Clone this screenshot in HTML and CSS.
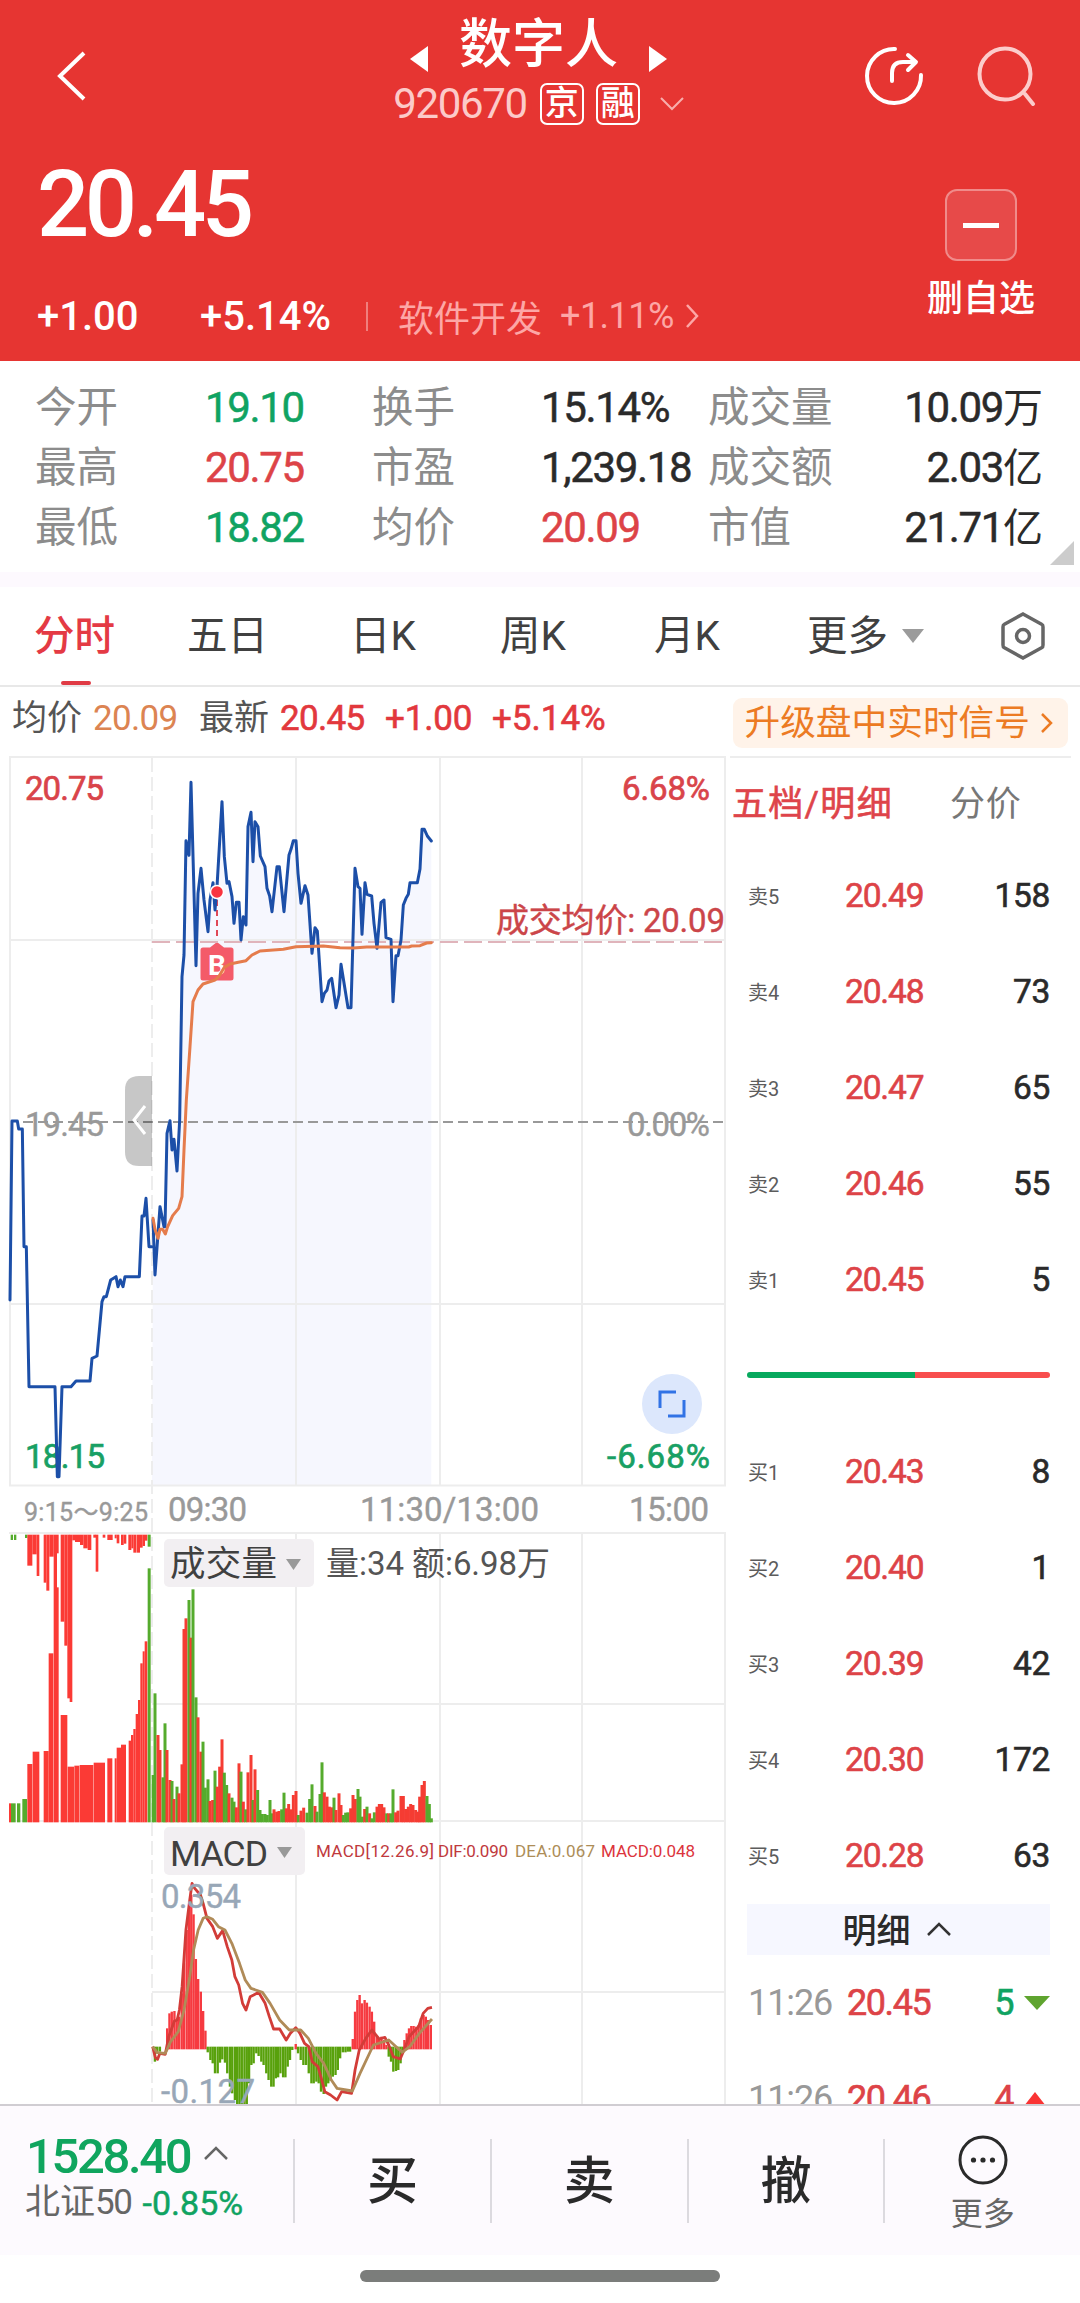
FILE: index.html
```html
<!DOCTYPE html>
<html lang="zh-CN">
<head>
    <meta charset="UTF-8">
    <meta name="viewport" content="width=device-width, initial-scale=1.0">
    <title>数字人 920670</title>
    <link rel="stylesheet" href="styles.css">
</head>
<body>
    <header class="header">
        <div class="nav">
            <svg class="back" width="32" height="54" viewBox="0 0 32 54"><path d="M28 4 4 27 28 50"/></svg>
            <div class="title">
                <div class="title-name">
                    <svg width="18" height="28"><path d="M18 1v26L0 14z"/></svg>
                    <h1>数字人</h1>
                    <svg width="18" height="28"><path d="M0 1v26L18 14z"/></svg>
                </div>
                <div class="title-code">
                    <span class="num code">920670</span>
                    <span class="badge">京</span>
                    <span class="badge">融</span>
                    <svg width="24" height="14" viewBox="0 0 24 14"><path d="M1 1 12 12 23 1"/></svg>
                </div>
            </div>
            <div class="nav-icons">
                <svg width="60" height="60" viewBox="0 0 60 60">
                    <path d="M31 3A27 27 0 1 0 57 29"/>
                    <path d="M28 35V27Q28 16 39 16H51M44 9l8 7-8 8"/>
                </svg>
                <svg class="search" width="60" height="60" viewBox="0 0 60 60">
                    <circle cx="28" cy="28" r="25.5"/>
                    <path d="M48 48l8 10"/>
                </svg>
            </div>
        </div>
        <div class="quote">
            <div class="quote-left">
                <div class="num price">20.45</div>
                <div class="change">
                    <span class="num chg">+1.00</span>
                    <span class="num pct">+5.14%</span>
                    <span class="sep"></span>
                    <span class="sector">软件开发</span>
                    <span class="num sector-pct">+1.11%</span>
                    <svg width="14" height="26" viewBox="0 0 14 26"><path d="M2 2 12 13 2 24"/></svg>
                </div>
            </div>
            <div class="watch">
                <div class="watch-btn"></div>
                <span>删自选</span>
            </div>
        </div>
    </header>

    <section class="stats">
        <span class="label">今开</span><span class="num green">19.10</span>
        <span class="label">换手</span><span class="num">15.14%</span>
        <span class="label">成交量</span><span class="num right">10.09<i>万</i></span>
        <span class="label">最高</span><span class="num red">20.75</span>
        <span class="label">市盈</span><span class="num">1,239.18</span>
        <span class="label">成交额</span><span class="num right">2.03<i>亿</i></span>
        <span class="label">最低</span><span class="num green">18.82</span>
        <span class="label">均价</span><span class="num red">20.09</span>
        <span class="label">市值</span><span class="num right">21.71<i>亿</i></span>
        <svg class="corner" width="24" height="24"><path d="M24 0v24H0z"/></svg>
    </section>

    <nav class="tabs">
        <span class="tab active">分时</span>
        <span class="tab">五日</span>
        <span class="tab">日K</span>
        <span class="tab">周K</span>
        <span class="tab">月K</span>
        <span class="tab more">更多<svg width="22" height="14"><path d="M0 0h22L11 14z"/></svg></span>
        <svg class="setting" width="46" height="50" viewBox="0 0 46 50">
            <path d="M23 3 42 13.5Q43 14 43 16V34Q43 36 42 36.5L23 47 4 36.500Q3 36 3 34V16Q3 14 4 13.500z"/>
            <circle cx="23" cy="25" r="6.500"/>
        </svg>
    </nav>

    <div class="info">
        <span class="label">均价</span>
        <span class="num orange">20.09</span>
        <span class="label last">最新</span>
        <span class="num red">20.45</span>
        <span class="num red diff">+1.00</span>
        <span class="num red rate">+5.14%</span>
        <div class="signal">升级盘中实时信号<svg width="12" height="22" viewBox="0 0 12 22"><path d="M1 2 10 11 1 20"/></svg></div>
    </div>

    <main class="main">
        <svg class="chart" width="730" height="1348" viewBox="0 756 730 1348">
            <!-- average-price area -->
            <path id="area" class="area"/>

            <!-- grid -->
            <g class="grid">
                <path d="M9 757H726M10 940H725M10 1304H725M9 1485.500H726M9 1533H726M152 1704H725M10 1821H725M152 1992H725"/>
                <path d="M10 757V1486M296 757V1486M440 757V1486M582 757V1486M725 757V1486"/>
                <path d="M296 1533V2104M440 1533V2104M582 1533V2104M725 1533V2104"/>
                <path class="dashed" d="M152 758V2104"/>
            </g>
            <path class="zero" d="M23 1122H725"/>

            <!-- axis labels -->
            <g class="axis">
                <text class="up" x="25" y="800" textLength="79">20.75</text>
                <text class="up" x="622" y="800" textLength="88">6.68%</text>
                <text x="25" y="1136" textLength="79">19.45</text>
                <text x="627" y="1136" textLength="83">0.00%</text>
                <text class="down" x="25" y="1468" textLength="80">18.15</text>
                <text class="down" x="607" y="1468" textLength="103">-6.68%</text>
                <text class="small" x="24" y="1521" textLength="124">9:15～9:25</text>
                <text x="168" y="1521" textLength="79">09:30</text>
                <text x="360" y="1521" textLength="179">11:30/13:00</text>
                <text x="629" y="1521" textLength="80">15:00</text>
            </g>

            <!-- buy marker -->
            <path class="marker-line" d="M217 900V940"/>
            <path class="marker" d="M203 947.500H210L217 942 224 947.500H231Q233.500 947.500 233.500 950V978Q233.500 980.500 231 980.500H203Q200.500 980.500 200.500 978V950Q200.500 947.500 203 947.500z"/>
            <text class="marker-text" x="217" y="975">B</text>

            <path class="cost" d="M152 942H726"/>
            <text class="cost-text" x="496" y="932" textLength="229">成交均价: 20.09</text>

            <svg x="0" y="740" width="450" height="750" viewBox="0 0 1350 2250">
                <polyline class="line" id="auction"/>
                <polyline class="line" id="price"/>
                <polyline class="line avg" id="avg"/>
            </svg>
            <circle class="marker-dot" cx="217" cy="892" r="6.500"/>

            <path class="handle" d="M152 1076V1166H139Q125 1166 125 1152V1090Q125 1076 139 1076z"/>
            <path class="handle-arrow" d="M145 1106 134 1120 145 1134"/>

            <circle class="expand" cx="672" cy="1404" r="30"/>
            <path class="expand-icon" d="M660 1408V1392H676M684 1400V1416H668"/>

            <!-- volume -->
            <svg id="volume" x="0" y="1500" width="450" height="340" viewBox="0 0 1350 1020"></svg>
            <rect class="pill" x="164" y="1539" width="150" height="48" rx="5"/>
            <text class="pill-text" x="170" y="1576" textLength="107">成交量</text>
            <path class="arrow" d="M286 1559H301L293.500 1570z"/>
            <text class="vol-text" x="326" y="1575" textLength="224">量:34 额:6.98万</text>

            <!-- macd -->
            <svg x="140" y="1820" width="300" height="284" viewBox="0 0 784 852" preserveAspectRatio="none">
                <g id="macd"></g>
                <polyline class="macd-line dif" points="33,680 40,712 46,718 52,700 66,703 75,650 90,603 97,600 103,570 110,500 120,330 130,240 136,190 143,205 158,225 165,250 175,295 190,320 202,355 216,332 228,380 240,420 248,470 258,495 268,550 277,570 288,530 297,525 310,517 327,550 338,590 349,627 365,627 382,660 393,640 407,623 418,640 430,670 441,680 450,725 465,740 475,780 483,815 498,825 515,840 527,815 553,820 562,750 573,690 590,655 606,630 625,657 640,652 650,675 662,710 680,717 690,690 703,650 728,620 740,580 752,565 763,562"/>
                <polyline class="macd-line dea" points="33,680 45,698 66,700 80,665 100,635 115,570 130,470 140,390 152,330 165,295 175,290 190,298 205,320 222,330 240,370 260,430 275,480 290,505 320,517 340,550 365,600 390,630 420,630 440,655 460,700 480,730 500,780 515,805 555,813 575,760 610,675 650,660 685,697 705,680 730,640 763,597"/>
            </svg>
            <rect class="pill" x="164" y="1827" width="141" height="48" rx="5"/>
            <text class="pill-text" x="170" y="1866" textLength="98">MACD</text>
            <path class="arrow" d="M277 1847H292L284.500 1858z"/>
            <g class="legend">
                <text x="316" y="1857" textLength="118">MACD[12.26.9]</text>
                <text x="438" y="1857" textLength="70">DIF:0.090</text>
                <text class="tan" x="515" y="1857" textLength="80">DEA:0.067</text>
                <text class="bright" x="601" y="1857" textLength="94">MACD:0.048</text>
            </g>
            <text class="range" x="161" y="1908" textLength="80">0.354</text>
            <text class="range" x="161" y="2103" textLength="94">-0.127</text>
        </svg>

        <aside class="side">
            <div class="side-tabs">
                <span class="on">五档/明细</span>
                <span>分价</span>
            </div>
            <div class="row"><span class="lv">卖5</span><span class="num red">20.49</span><span class="num qty">158</span></div>
            <div class="row"><span class="lv">卖4</span><span class="num red">20.48</span><span class="num qty">73</span></div>
            <div class="row"><span class="lv">卖3</span><span class="num red">20.47</span><span class="num qty">65</span></div>
            <div class="row"><span class="lv">卖2</span><span class="num red">20.46</span><span class="num qty">55</span></div>
            <div class="row"><span class="lv">卖1</span><span class="num red">20.45</span><span class="num qty">5</span></div>
            <div class="ratio"><div class="ratio-bar"></div></div>
            <div class="row"><span class="lv">买1</span><span class="num red">20.43</span><span class="num qty">8</span></div>
            <div class="row"><span class="lv">买2</span><span class="num red">20.40</span><span class="num qty">1</span></div>
            <div class="row"><span class="lv">买3</span><span class="num red">20.39</span><span class="num qty">42</span></div>
            <div class="row"><span class="lv">买4</span><span class="num red">20.30</span><span class="num qty">172</span></div>
            <div class="row"><span class="lv">买5</span><span class="num red">20.28</span><span class="num qty">63</span></div>
            <div class="detail-head">明细<svg width="24" height="14" viewBox="0 0 24 14"><path d="M1 13 12 2 23 13"/></svg></div>
            <div class="deal"><span class="num time">11:26</span><span class="num red">20.45</span><span class="num green amount">5</span><svg width="26" height="14"><path fill="#5fa42f" d="M0 0h26L13 14z"/></svg></div>
            <div class="deal"><span class="num time">11:26</span><span class="num red">20.46</span><span class="num red amount">4</span><svg width="26" height="14"><path fill="#fa3434" d="M0 14h22L11 0z"/></svg></div>
        </aside>
    </main>

    <footer class="footer">
        <div class="index">
            <div class="index-top"><span class="num">1528.40</span><svg width="26" height="14" viewBox="0 0 26 14"><path d="M2 13 13 2 24 13"/></svg></div>
            <div class="index-bottom"><span>北证</span><span class="num">50</span><span class="num green">-0.85%</span></div>
        </div>
        <div class="action">买</div>
        <div class="action">卖</div>
        <div class="action">撤</div>
        <div class="action more-action">
            <svg width="50" height="50" viewBox="0 0 50 50">
                <circle class="ring" cx="25" cy="25" r="23"/>
                <circle cx="15.500" cy="25" r="2.600"/><circle cx="25" cy="25" r="2.600"/><circle cx="34.500" cy="25" r="2.600"/>
            </svg>
            <span>更多</span>
        </div>
    </footer>
    <div class="home"><div class="home-bar"></div></div>

    <script src="script.js"></script>
</body>
</html>
```
FILE: styles.css
```css
* {
    box-sizing: border-box;
}
body {
    margin: 0;
    width: 1080px;
    height: 2303px;
    overflow: hidden;
    background: #fff;
    color: #2a2a2a;
    font-family: Roboto, "Noto Sans CJK SC", sans-serif;
    white-space: nowrap;
}
svg {
    display: block;
    flex: none;
}
.num {
    font-weight: 500;
    letter-spacing: -0.04em;
}
.red {
    color: #dd4347;
}
.green {
    color: #10a362;
}

/* header */
.header {
    height: 361px;
    background: #e63532;
    color: #fff;
}
.nav {
    display: grid;
    grid-template-columns: 1fr auto 1fr;
    height: 160px;
}
.back {
    margin: 49px 0 0 56px;
    fill: none;
    stroke: #fff;
    stroke-width: 4;
}
.title {
    margin-left: -3px;
}
.title-name {
    display: flex;
    justify-content: center;
    align-items: center;
    gap: 31px;
    height: 82px;
    padding-top: 8px;
}
.title-name svg {
    margin-top: 28px;
    fill: #fff;
}
.title-name h1 {
    margin: 0;
    font-size: 53px;
    font-weight: 500;
    line-height: 82px;
}
.title-code {
    display: flex;
    align-items: center;
    height: 43px;
}
.title-code svg {
    margin-left: 20px;
    fill: none;
    stroke: #f8aeac;
    stroke-width: 2;
}
.code {
    margin-right: 13px;
    font-size: 42px;
    font-weight: 400;
    letter-spacing: -0.032em;
    color: #fccac9;
}
.badge {
    width: 44px;
    height: 42px;
    margin-right: 12px;
    border: 2px solid #fff;
    border-radius: 7px;
    font-size: 34px;
    font-weight: 500;
    line-height: 37px;
    text-align: center;
}
.badge + .badge {
    margin-right: 0;
}
.nav-icons {
    display: flex;
    justify-content: flex-end;
    gap: 53px;
    padding: 46px 43px 0 0;
    fill: none;
    stroke: #fff;
    stroke-width: 4;
    stroke-linecap: round;
    stroke-linejoin: round;
}
.search {
    stroke: #fccccb;
}
.quote {
    display: flex;
    justify-content: space-between;
    padding: 0 45px 0 37px;
}
.price {
    height: 126px;
    font-size: 92px;
    letter-spacing: -0.048em;
    line-height: 89px;
}
.change {
    display: flex;
    align-items: center;
    height: 60px;
    font-size: 40px;
}
.change .chg,
.change .pct {
    letter-spacing: 0;
}
.chg {
    width: 163px;
}
.pct {
    width: 166px;
}
.sep {
    width: 2px;
    height: 29px;
    margin-right: 30px;
    background: #f07f7d;
}
.sector {
    width: 162px;
    font-size: 36px;
    color: #fda7a6;
}
.change .sector-pct {
    width: 125px;
    font-size: 36px;
    font-weight: 400;
    letter-spacing: -0.015em;
    color: #fda7a6;
}
.change svg {
    fill: none;
    stroke: #fda7a6;
    stroke-width: 2.5;
}
.watch {
    width: 108px;
    padding-top: 29px;
    font-size: 36px;
    font-weight: 500;
    line-height: 76px;
}
.watch-btn {
    display: flex;
    align-items: center;
    justify-content: center;
    width: 72px;
    height: 72px;
    margin-left: 18px;
    border: 2px solid #f08b8a;
    border-radius: 12px;
    background: #e74a49;
}
.watch-btn::before {
    content: "";
    width: 36px;
    height: 5px;
    background: #fff;
}

/* stats */
.stats {
    position: relative;
    display: grid;
    grid-template-columns: 170px 167px 169px 167px 130px 1fr;
    grid-auto-rows: 60px;
    height: 211px;
    padding: 16px 37px 0 35px;
    font-size: 42px;
    line-height: 61px;
}
.stats .num {
    font-weight: 400;
    letter-spacing: -0.032em;
    -webkit-text-stroke: 0.5px currentColor;
}
.stats .label {
    font-size: 41.5px;
    color: #8c8c8c;
}
.stats .right {
    text-align: right;
}
.stats i {
    font-style: normal;
    font-size: 40px;
    letter-spacing: 0;
    -webkit-text-stroke: 0;
}
.corner {
    position: absolute;
    right: 6px;
    bottom: 7px;
    fill: #ccc;
}

/* tabs */
.tabs {
    display: flex;
    align-items: center;
    height: 115px;
    padding: 0 34px 0 34px;
    border-top: 15px solid #fdf9fe;
    border-bottom: 2px solid #e8e8e8;
    font-size: 40.5px;
    line-height: 100px;
    color: #404040;
}
.tab {
    width: 153px;
}
.tab:nth-child(2) {
    width: 163px;
}
.tab:nth-child(3) {
    width: 150px;
}
.tab:nth-child(4) {
    width: 154px;
}
.tab:nth-child(5) {
    width: 153px;
}
.tab.active {
    position: relative;
    color: #e43a44;
    font-weight: 500;
}
.tab.active::after {
    content: "";
    position: absolute;
    left: 27px;
    bottom: 1px;
    width: 30px;
    height: 4px;
    border-radius: 2px;
    background: #e03b45;
}
.tab.more {
    display: flex;
    align-items: center;
    gap: 14px;
    width: 193px;
}
.tab.more svg {
    fill: #9b9b9b;
}
.setting {
    fill: none;
    stroke: #666;
    stroke-width: 3.5;
}

/* latest quote */
.info {
    display: flex;
    align-items: center;
    height: 69px;
    padding: 0 12px 0 12px;
    font-size: 35px;
    line-height: 64px;
}
.info > span {
    height: 69px;
}
.info .label {
    width: 81px;
    color: #555;
}
.info .num {
    width: 106px;
    letter-spacing: -0.02em;
}
.info .orange {
    font-weight: 400;
    color: #dc8452;
}
.info .num.red {
    width: 105px;
    font-weight: 400;
    color: #e2383d;
    -webkit-text-stroke: 0.6px currentColor;
}
.info .num.diff {
    width: 107px;
    letter-spacing: -0.005em;
}
.info .num.rate {
    letter-spacing: 0;
}
.signal {
    display: flex;
    align-items: center;
    gap: 11px;
    height: 50px;
    margin: 3px 0 0 auto;
    padding: 0 15px 0 12px;
    border-radius: 9px;
    background: #fff3e9;
    font-size: 35.7px;
    line-height: 50px;
    color: #ec7b23;
}
.signal svg {
    fill: none;
    stroke: #ec7b23;
    stroke-width: 2.5;
}

/* charts */
.main {
    display: flex;
    height: 1348px;
    overflow: hidden;
}
.chart {
    font-family: Roboto, "Noto Sans CJK SC", sans-serif;
}
.area {
    fill: #f6f7fe;
}
.grid {
    fill: none;
    stroke: #ededed;
    stroke-width: 2;
}
.dashed {
    stroke-dasharray: 14 5;
}
.zero {
    stroke: #999;
    stroke-width: 2;
    stroke-dasharray: 10 5;
}
.axis {
    font-size: 33px;
    fill: #999;
}
.axis text {
    stroke: #999;
    stroke-width: 0.4;
}
.axis .up {
    fill: #d9444a;
    stroke: #d9444a;
    stroke-width: 0.7;
}
.axis .down {
    fill: #18a064;
    stroke: #18a064;
    stroke-width: 0.7;
}
.axis .small {
    font-size: 25px;
}
.line {
    fill: none;
    stroke: #1c4fa8;
    stroke-width: 9;
    stroke-linejoin: round;
    stroke-linecap: round;
}
.avg {
    stroke: #e57c4c;
}
.cost {
    stroke: #e0b4bb;
    stroke-width: 2;
    stroke-dasharray: 18 6;
}
.cost-text {
    font-size: 33px;
    fill: #cb4549;
    stroke: #cb4549;
    stroke-width: 0.4;
}
.marker {
    fill: #f45b69;
}
.marker-line {
    stroke: #e04856;
    stroke-width: 2;
    stroke-dasharray: 6 4;
}
.marker-dot {
    fill: #f9343f;
    stroke: #fff;
    stroke-width: 1.5;
}
.marker-text {
    font-size: 28px;
    font-weight: 700;
    text-anchor: middle;
    fill: #fff;
}
.handle {
    fill: #000;
    fill-opacity: 0.22;
}
.handle-arrow {
    fill: none;
    stroke: #fff;
    stroke-width: 3;
}
.expand {
    fill: #dce7fc;
}
.expand-icon {
    fill: none;
    stroke: #3173e5;
    stroke-width: 3;
}
.bar {
    fill: none;
    stroke-width: 9;
}
.bar-red {
    stroke: #f53c33;
}
.bar-green {
    stroke: #55ab2d;
}
.macd-bar {
    fill: none;
    stroke-width: 6.2;
}
.macd-red {
    stroke: #f63a40;
}
.macd-green {
    stroke: #58a10c;
}
.macd-line {
    fill: none;
    stroke-width: 2.8;
    stroke-linejoin: round;
    vector-effect: non-scaling-stroke;
}
.dif {
    stroke: #d23c38;
}
.dea {
    stroke: #b08b58;
}
.pill {
    fill: #f2eff2;
}
.pill-text {
    font-size: 35.5px;
    fill: #404040;
}
.arrow {
    fill: #999;
}
.vol-text {
    font-size: 33px;
    fill: #555;
}
.legend {
    font-size: 17px;
    fill: #c0393d;
}
.tan {
    fill: #ad8d57;
}
.bright {
    fill: #dc343c;
}
.range {
    font-size: 33px;
    fill: #98a7b7;
    stroke: #98a7b7;
    stroke-width: 0.4;
}

/* order book */
.side {
    width: 341px;
    border-top: 2px solid #ededed;
}
.side-tabs {
    display: flex;
    align-items: center;
    gap: 57px;
    height: 89px;
    padding: 0 0 5px 2px;
    font-size: 35px;
    letter-spacing: 0.7px;
    color: #777;
}
.side-tabs .on {
    letter-spacing: 1.3px;
    color: #de444a;
    -webkit-text-stroke: 0.6px currentColor;
}
.row {
    display: grid;
    grid-template-columns: 97px 90px 1fr;
    align-items: center;
    height: 96px;
    padding: 0 21px 0 18px;
    font-size: 33.5px;
}
.row .num,
.deal .num {
    font-weight: 400;
    -webkit-text-stroke: 0.6px currentColor;
}
.row .num.red {
    letter-spacing: -0.035em;
}
.lv {
    font-size: 20px;
    color: #5c5c5c;
}
.row .qty {
    text-align: right;
    letter-spacing: -0.01em;
}
.ratio {
    display: flex;
    align-items: center;
    height: 96px;
    padding-left: 17px;
}
.ratio-bar {
    width: 303px;
    height: 6px;
    border-radius: 3px;
    background: linear-gradient(to right, #07a95e 168px, #f84e4e 168px);
}
.detail-head {
    display: flex;
    align-items: center;
    justify-content: center;
    gap: 16px;
    width: 303px;
    height: 51px;
    margin: 1px 0 0 17px;
    padding: 0 4px 2px 0;
    background: #f6f7ff;
    font-size: 34px;
    font-weight: 500;
}
.detail-head svg {
    fill: none;
    stroke: #333;
    stroke-width: 2.5;
}
.deal {
    display: grid;
    grid-template-columns: 99px 90px 1fr 26px;
    align-items: center;
    height: 96px;
    padding: 0 21px 0 18px;
    font-size: 36px;
}
.deal .time {
    color: #999;
    letter-spacing: -0.03em;
    -webkit-text-stroke: 0;
}
.amount {
    padding-right: 11px;
    text-align: right;
}

/* bottom bar */
.footer {
    display: flex;
    align-items: center;
    height: 151px;
    border-top: 2px solid #d0cdd2;
    background: #fdfafe;
}
.index {
    width: 294px;
    padding: 0 0 8px 26px;
}
.index-top {
    display: flex;
    align-items: center;
    gap: 13px;
    height: 52px;
    font-size: 49px;
    line-height: 52px;
    color: #10a55e;
}
.index-top .num {
    letter-spacing: -0.048em;
}
.index-top svg {
    margin-bottom: 8px;
    fill: none;
    stroke: #666;
    stroke-width: 2.5;
}
.index-bottom {
    display: flex;
    height: 40px;
    margin-left: -1px;
    font-size: 35px;
    line-height: 40px;
    color: #666;
}
.index-bottom .num {
    font-weight: 400;
}
.index-bottom .green {
    margin-left: 11px;
    font-size: 34px;
    letter-spacing: 0;
    -webkit-text-stroke: 0.5px currentColor;
}
.action {
    width: 197.3px;
    height: 84px;
    border-left: 2px solid #dcdadf;
    font-size: 51px;
    font-weight: 500;
    line-height: 86px;
    text-align: center;
}
.more-action {
    display: flex;
    flex-direction: column;
    align-items: center;
    font-size: 32px;
    font-weight: 400;
    line-height: 48px;
    color: #666;
}
.more-action svg {
    margin-top: -4px;
    margin-bottom: 5px;
    fill: #2a2a2a;
}
.more-action .ring {
    fill: none;
    stroke: #2a2a2a;
    stroke-width: 3;
}
.home {
    display: flex;
    justify-content: center;
    padding-top: 15px;
}
.home-bar {
    width: 360px;
    height: 12px;
    border-radius: 6px;
    background: #7b7d7b;
}
```
FILE: script.js
```javascript
const auction = '30,1680 36,1143 52,1143 56,1167 67,1167 72,1520 79,1520 87,1940 165,1940 172,2210 177,2210 186,1940 213,1940 228,1923 270,1923 276,1855 291,1848 306,1685 312,1670 319,1670 332,1620 348,1610 354,1640 361,1620 369,1640 375,1610 418,1610 426,1428 432,1428 438,1375 447,1520 456,1520';
const price = '459,1440 465,1605 480,1400 492,1460 495,1460 501,1180 510,1142 516,1230 522,1198 531,1293 539,1140 546,710 552,645 558,302 567,346 573,127 588,677 594,460 603,385 612,480 624,575 630,480 639,428 645,510 651,440 666,185 673,350 681,430 687,425 696,470 702,550 709,487 717,487 723,600 730,530 738,555 744,260 753,217 759,365 765,245 774,260 781,348 795,380 801,445 809,468 816,515 831,380 838,380 852,515 867,345 873,328 880,302 888,302 894,400 903,490 915,437 924,465 936,640 945,563 952,573 966,785 973,760 981,750 987,723 995,715 1008,803 1017,765 1023,673 1044,803 1053,803 1065,385 1074,440 1080,445 1086,583 1095,428 1101,463 1115,468 1122,550 1131,625 1143,487 1152,480 1158,593 1173,598 1179,785 1188,647 1194,647 1203,600 1210,495 1218,475 1225,463 1230,428 1252,428 1260,387 1266,268 1273,268 1282,288 1294,303';
const avg = '459,1435 465,1468 474,1495 480,1468 488,1468 496,1482 503,1460 518,1427 536,1405 546,1370 552,1230 559,1080 570,920 579,785 594,750 609,732 645,720 656,710 673,682 690,672 715,667 738,662 756,645 780,633 850,628 888,620 970,618 1020,623 1060,624 1100,621 1226,621 1235,618 1260,617 1280,609 1294,608';

document.getElementById('auction').setAttribute('points', auction);
document.getElementById('price').setAttribute('points', price);
document.getElementById('avg').setAttribute('points', avg);

const pts = price.split(' ').map(p => p.split(',').map(Number));
document.getElementById('area').setAttribute('d',
    'M152 1485 ' + pts.map(([x, y]) => `L${x / 3} ${740 + y / 3}`).join(' ') + ' L431.300 1485z');

// r = up, g = down
const volume = 'g465,580 r474,705 r480,750 g489,832 g495,670 r501,750 r510,840 g516,843 r522,897 g531,860 r537,880 r546,793 r552,387 r558,355 g567,300 r573,413 g579,268 g588,592 r594,652 r603,755 g609,725 g616,863 g624,838 r630,903 r638,900 g645,812 r652,860 r659,800 r666,718 g673,818 g680,855 r687,880 g696,893 g702,905 r709,922 r717,790 g723,815 r730,905 g737,928 r744,817 r753,765 g759,900 r765,808 g773,870 g780,930 g787,942 g795,942 g802,945 g810,900 g816,940 r822,928 r830,935 r837,933 g845,928 g852,878 r859,925 r866,912 r873,928 r880,885 r888,873 g895,945 r903,932 r911,923 g921,938 g929,897 g936,853 r945,918 g951,935 g960,882 g966,787 r973,877 r981,890 r988,920 r995,922 g1002,893 r1008,930 r1017,880 r1023,915 g1030,945 g1037,938 g1044,937 r1052,925 r1059,885 r1066,897 g1074,867 g1080,890 g1087,950 r1094,927 g1101,920 r1109,940 g1116,955 g1123,937 r1131,920 r1138,912 r1145,912 r1152,922 g1160,940 r1166,940 g1173,940 g1179,868 r1187,937 r1194,932 r1203,888 r1210,888 r1217,927 r1225,920 r1232,912 r1239,915 r1247,930 r1254,935 r1259,890 r1266,855 r1273,843 g1281,888 g1288,912 g1294,955';
const macd = 'g39,725 g45,700 g52,695 r71,625 r77,580 r83,575 r90,573 r96,600 r102,590 r109,520 r115,430 r122,330 r128,270 r134,225 r140,283 r146,417 r152,477 r159,515 r165,573 r171,632 g177,697 g184,720 g190,730 g196,760 g203,760 g209,728 g215,718 g222,728 g228,760 g235,800 g241,820 g248,840 g254,852 g260,852 g266,852 g273,852 g279,852 g285,790 g291,735 g297,730 g304,700 g310,708 g317,725 g323,735 g330,760 g336,780 g343,800 g349,800 g355,775 g361,772 g367,760 g374,772 g380,772 g386,740 g392,720 g398,690 r407,672 g413,700 g420,720 g427,735 g434,735 g441,760 g448,790 g454,790 g461,785 g467,790 g473,815 g480,822 g486,800 g492,790 g498,782 g504,770 g511,765 g517,750 g523,715 g530,697 g537,697 g543,695 g549,695 r556,657 r562,575 r568,540 r574,525 r580,550 r587,540 r593,548 r600,560 r606,575 r612,605 r619,650 r625,655 r631,650 r638,660 r644,675 g650,710 g656,725 g662,755 g669,753 g675,750 g681,730 g687,700 r691,660 r697,640 r703,625 r709,618 r715,618 r722,620 r728,615 r734,595 r741,585 r747,590 r753,600 r760,615';

// call auction: [colour, x1, x2, y1, y2]
const auctionBars = [
    ['red', 27, 33, 910, 967], ['green', 33, 47, 910, 967], ['green', 51, 61, 910, 967], ['green', 67, 81, 897, 967],
    ['red', 82, 97, 792, 967], ['red', 98, 118, 755, 967], ['red', 131, 146, 753, 967], ['red', 146, 160, 460, 967],
    ['red', 161, 171, 104, 967], ['red', 171, 176, 262, 967], ['red', 182, 202, 645, 967], ['red', 203, 222, 800, 967],
    ['red', 223, 238, 797, 967], ['red', 239, 280, 795, 967], ['red', 281, 315, 788, 967], ['red', 322, 337, 775, 967],
    ['red', 344, 350, 775, 967], ['red', 350, 363, 743, 967], ['red', 363, 378, 734, 967], ['red', 386, 393, 722, 967],
    ['red', 393, 400, 705, 967], ['red', 400, 407, 687, 967], ['red', 407, 414, 642, 967], ['red', 414, 421, 600, 967],
    ['red', 421, 428, 490, 967], ['red', 428, 434, 454, 967], ['red', 434, 442, 424, 967], ['green', 443, 452, 205, 967],
    ['green', 455, 462, 825, 967],
    ['green', 32, 39, 104, 120], ['green', 42, 49, 104, 120], ['green', 75, 82, 104, 114],
    ['red', 82, 97, 104, 197], ['red', 97, 110, 104, 163], ['red', 110, 118, 104, 228], ['red', 131, 139, 104, 248],
    ['red', 139, 148, 104, 272], ['red', 148, 161, 104, 170], ['red', 171, 176, 104, 160], ['red', 182, 193, 104, 365],
    ['red', 193, 202, 104, 437], ['red', 202, 210, 104, 595], ['red', 209, 217, 104, 606], ['red', 217, 225, 104, 121],
    ['red', 225, 240, 104, 126], ['red', 240, 250, 104, 135], ['red', 250, 263, 104, 145], ['red', 263, 274, 104, 150],
    ['red', 280, 288, 104, 113], ['red', 287, 295, 104, 215], ['red', 308, 316, 104, 113], ['red', 322, 338, 104, 120],
    ['red', 344, 350, 104, 115], ['red', 350, 358, 104, 130], ['red', 363, 371, 104, 135], ['red', 371, 379, 104, 131],
    ['red', 385, 394, 104, 150], ['red', 394, 400, 104, 145], ['red', 400, 409, 104, 158], ['red', 410, 420, 104, 158],
    ['red', 420, 428, 104, 143], ['red', 428, 435, 104, 138], ['red', 435, 442, 104, 122], ['green', 443, 452, 104, 140]
];

const volumeSvg = document.getElementById('volume');

function add(parent, tag, attrs) {
    const el = document.createElementNS('http://www.w3.org/2000/svg', tag);
    Object.keys(attrs).forEach(key => el.setAttribute(key, attrs[key]));
    parent.appendChild(el);
}

function drawBars(parent, data, cls, prefix, redBase, greenBase) {
    data.split(' ').forEach(item => {
        const red = item[0] === 'r';
        const [x, y] = item.slice(1).split(',');
        add(parent, 'path', {
            class: `${cls} ${prefix}-${red ? 'red' : 'green'}`,
            d: `M${x} ${red ? redBase : greenBase}V${y}`
        });
    });
}

auctionBars.forEach(([colour, x1, x2, y1, y2]) => {
    add(volumeSvg, 'rect', {
        x: x1, y: y1, width: x2 - x1, height: y2 - y1,
        fill: colour === 'red' ? '#fb3a35' : '#55ab2d'
    });
});

drawBars(volumeSvg, volume, 'bar', 'bar', 967, 967);
drawBars(document.getElementById('macd'), macd, 'macd-bar', 'macd', 688, 680);
```
